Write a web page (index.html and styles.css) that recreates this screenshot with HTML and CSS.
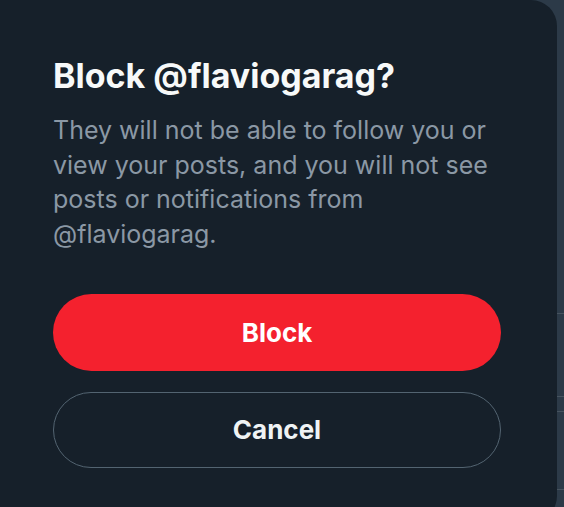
FILE: index.html
```html
<!DOCTYPE html>
<html>
<head>
  <meta charset="UTF-8">
  <title>Block</title>
  <link rel="stylesheet" href="styles.css">
</head>
<body>
  <div class="screen">
    <div class="dialog">
      <h1 class="title">Block @flaviogarag?</h1>
      <p class="text">They will not be able to follow you or view your posts, and you will not see posts or notifications from @flaviogarag.</p>
      <div class="actions">
        <button class="btn btn_block" type="button">Block</button>
        <button class="btn btn_cancel" type="button">Cancel</button>
      </div>
    </div>

    <!-- page behind the overlay -->
    <div class="behind">
      <div class="row" style="height: 314px"></div>
      <div class="row" style="height: 83px"></div>
      <div class="row" style="height: 15px"></div>
      <div class="row" style="height: 78px"></div>
      <div class="row"></div>
    </div>
  </div>
</body>
</html>
```

FILE: styles.css
```css
html, body {
  margin: 0;
  height: 100%;
  overflow: hidden;
  background: #2c3a48;
  font-family: Inter, "Open Sans", Arial, sans-serif;
}

.screen {
  display: flex;
  height: 100%;
}

.dialog {
  flex: 0 0 557px;
  box-sizing: border-box;
  height: 522px;
  padding: 56px 56px 0 53px;
  background: #16202a;
  border-radius: 0 26px 26px 0;
}
  .dialog .title {
    margin: 0;
    font-size: 34px;
    line-height: 40px;
    font-weight: 700;
    color: #f7f9f9;
  }
  .dialog .text {
    margin: 17px 0 0;
    font-size: 25px;
    line-height: 34.5px;
    color: #8b98a5;
  }

.actions {
  display: flex;
  flex-direction: column;
  gap: 21px;
  margin-top: 43px;
}
  .btn {
    display: block;
    box-sizing: border-box;
    width: 448px;
    height: 77px;
    margin: 0;
    padding: 0;
    border-radius: 39px;
    border: 1px solid transparent;
    font: 700 26px/1 Inter, "Open Sans", Arial, sans-serif;
    cursor: pointer;
  }
  .btn_block {
    background: #f4212e;
    color: #fff;
  }
  .btn_cancel {
    height: 76px;
    background: transparent;
    border-color: #536471;
    color: #eff3f4;
  }

.behind {
  flex: 1;
  display: flex;
  flex-direction: column;
}
  .behind .row {
    flex: 0 0 auto;
    border-bottom: 1px solid #46535f;
    box-sizing: border-box;
  }
  .behind .row:last-child {
    border-bottom: 0;
  }
```
